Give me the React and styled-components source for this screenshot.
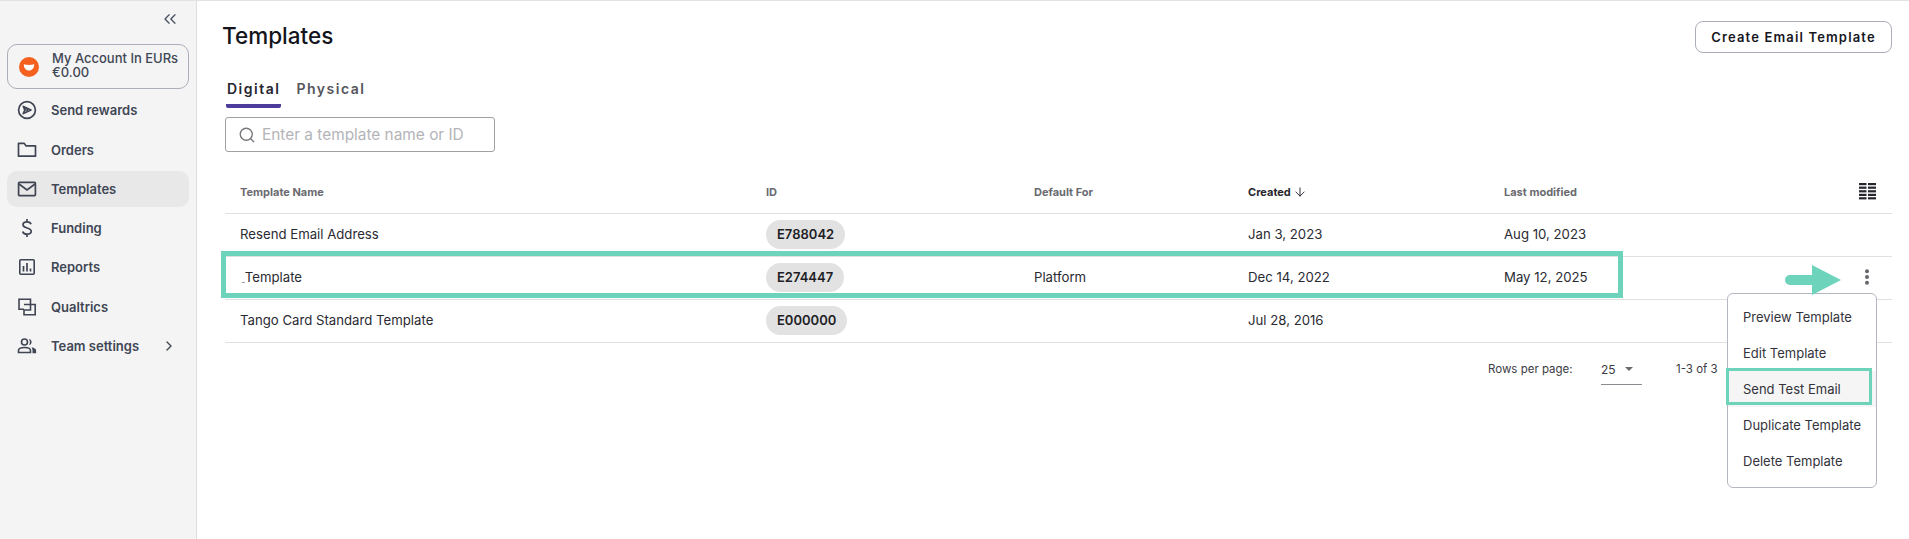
import React from "react";
import styled, { createGlobalStyle } from "styled-components";
import { ChevronsLeft, ChevronRight, Search, ArrowDown } from "lucide-react";

const Global = createGlobalStyle`
  html, body { margin: 0; padding: 0; background: #fff; }
  body { font-family: Inter, "Liberation Sans", sans-serif; color: #22222b; overflow: hidden; }
  * { box-sizing: border-box; }
`;

const Page = styled.div`
  width: 1909px; height: 539px; display: flex; border-top: 1px solid #e2e2e4; position: relative; overflow: hidden;
`;
const Sidebar = styled.aside`
  width: 197px; flex: none; background: #f4f4f4; border-right: 1px solid #dedee0;
  padding: 0 7px; display: flex; flex-direction: column;
`;
const Collapse = styled.div`
  height: 37px; display: flex; align-items: flex-end; justify-content: flex-end; padding: 0 9px 9px 0; color: #4a5160;
`;
const Account = styled.div`
  margin-top: 6px; height: 45px; border: 1px solid #a9aeb8; border-radius: 10px; display: flex; align-items: center;
  padding: 0 0 3px 11px; gap: 13px;
`;
const AccountLogo = styled.svg` width: 20px; height: 20px; flex: none; margin-top: 3px; `;
const AccountText = styled.div`
  font-size: 13px; font-weight: 500; line-height: 14px; color: #404654; white-space: nowrap;
`;
const NavItem = styled.div`
  height: 36px; margin-top: 3.3px; display: flex; align-items: center; padding-left: 10px; gap: 14px; border-radius: 10px;
  font-size: 13px; font-weight: 600; color: #404654; background: ${p => p.$active ? "#e8e8e8" : "transparent"};
  white-space: nowrap;
`;
const NavIcon = styled.span`
  width: 20px; height: 20px; display: flex; align-items: center; justify-content: center; flex: none;
`;
const NavChevron = styled.span`
  margin-left: auto; margin-right: 12px; display: flex;
`;
const Main = styled.main`
  flex: 1; padding: 20px 17px 0 22px; position: relative;
`;
const Header = styled.div`
  display: flex; justify-content: space-between; align-items: flex-start; height: 55px;
`;
const Title = styled.h1`
  margin: 1px 0 0 3px; font-size: 22.5px; line-height: 28px; font-weight: 500; color: #14141c;
`;
const CreateButton = styled.button`
  width: 197px; height: 32px; background: #fff; border: 1px solid #a9aeb8; border-radius: 8px;
  font: 600 13px Inter, sans-serif; letter-spacing: 1.15px; color: #17171f; padding: 0;
`;
const Tabs = styled.div`
  display: flex; gap: 14px; margin-left: 7px; height: 32px;
`;
const Tab = styled.div`
  height: 32px; padding: 4px 1px 0; font-size: 14px; font-weight: 600; letter-spacing: 1.5px;
  color: ${p => p.$active ? "#26262e" : "#55555c"};
  border-bottom: 4px solid ${p => p.$active ? "#4d3c9b" : "transparent"}; border-radius: 0 0 2px 2px;
`;
const SearchBox = styled.div`
  margin: 9px 0 0 6px; width: 270px; height: 35px; border: 1px solid #a0a0a4; border-radius: 3px;
  display: flex; align-items: center; padding-left: 12px; gap: 6px; color: #b4b4b8; font-size: 15.4px;
`;
const SearchIcon = styled(Search)` color: #77777c; `;
const Table = styled.div` margin: 18px 0 0 6px; `;
const Row = styled.div`
  display: grid; grid-template-columns: 526px 268px 214px 256px 1fr 50px; align-items: center; padding-left: 15px;
  padding-bottom: ${p => p.$head ? "0" : "2px"};
  height: ${p => p.$head ? "44px" : "43px"}; border-bottom: 1.5px solid #e0e0e3; font-size: 13.2px; color: #2a2a32;
`;
const HeadCell = styled.div`
  font-size: 11px; font-weight: 700; color: ${p => p.$strong ? "#26262e" : "#6a6a70"};
  display: flex; align-items: center; gap: 2px;
`;
const Chip = styled.span`
  display: inline-flex; align-items: center; height: 29px; padding: 0 11px; background: #e2e2e2; border-radius: 15px;
  font-size: 13px; font-weight: 600; color: #1e1e26; justify-self: start;
`;
const EndCell = styled.div` display: flex; justify-content: center; `;
const Underscore = styled.span` font-size: 6px; margin-left: 2px; `;
const Pagination = styled.div`
  display: flex; align-items: flex-start; margin-top: 15px; padding-left: 1269px; font-size: 11.5px; color: #3c3c44;
`;
const RowsLabel = styled.span` width: 113px; line-height: 22px; `;
const RowsSelect = styled.div`
  width: 41px; height: 27px; border-bottom: 1px solid #8a8a90; display: flex; justify-content: space-between;
  align-items: center; padding: 0 9px 4px 0; margin-right: 34px; font-size: 12px;
`;
const Caret = styled.span`
  width: 0; height: 0; border-left: 4.5px solid transparent; border-right: 4.5px solid transparent; border-top: 4.5px solid #6a6a70;
`;
const RangeText = styled.span` line-height: 22px; `;
const Menu = styled.div`
  position: absolute; left: 1530px; top: 292px; width: 150px; height: 195px; background: #fff;
  border: 1px solid #b3b7c0; border-radius: 6px; padding: 5px 0;
`;
const MenuItem = styled.div`
  height: 36px; display: flex; align-items: center; padding-left: 15px; font-size: 13px; color: #33333b;
  background: ${p => p.$hover ? "#f5f5f5" : "transparent"}; white-space: nowrap;
`;
const RowHighlight = styled.div`
  position: absolute; left: 24px; top: 250px; width: 1402px; height: 47px; border: 5px solid #6dd3bb; pointer-events: none;
`;
const MenuHighlight = styled.div`
  position: absolute; left: 1529px; top: 367px; width: 146px; height: 37px; border: 3px solid #6dd3bb; pointer-events: none;
`;
const Arrow = styled.svg` position: absolute; left: 1586px; top: 263px; `;

const stroke = "#3f4553";
const SendIcon = () => (
  <svg width="20" height="20" viewBox="0 0 20 20" fill="none" stroke={stroke} strokeWidth="1.7">
    <circle cx="10" cy="10" r="8.4" />
    <path d="M6.3 6.4 14 10l-7.7 3.6 1.5-3.6zM7.8 10H11" strokeLinejoin="round" />
  </svg>
);
const FolderIcon = () => (
  <svg width="20" height="20" viewBox="0 0 20 20" fill="none" stroke={stroke} strokeWidth="1.7">
    <path d="M1.5 16.2V3.4h5.8l1.6 2.4h9.6v10.4z" strokeLinejoin="round" />
  </svg>
);
const MailIcon = () => (
  <svg width="20" height="20" viewBox="0 0 20 20" fill="none" stroke={stroke} strokeWidth="1.7">
    <rect x="1.6" y="3.4" width="16.8" height="13.2" rx="0.8" />
    <path d="M2 5l8 6 8-6" />
  </svg>
);
const DollarIcon = () => (
  <svg width="20" height="20" viewBox="0 0 20 20" fill="none" stroke={stroke} strokeWidth="1.7">
    <path d="M14 6.2C13.6 4.5 12 3.8 10 3.8c-2.4 0-4 1.1-4 2.9 0 4.2 8.2 2.3 8.2 6.6 0 1.8-1.8 2.9-4.2 2.9-2.2 0-3.9-.9-4.3-2.7M10 1v2.8M10 16.2V19" />
  </svg>
);
const ReportsIcon = () => (
  <svg width="18" height="18" viewBox="0 0 18 18" fill="none" stroke={stroke}>
    <rect x="1.8" y="1.8" width="14.4" height="14.4" rx="1" strokeWidth="1.6" />
    <path d="M5.5 8v5.5M9 5v8.5M12.5 10.5v3" strokeWidth="1.7" />
  </svg>
);
const QualtricsIcon = () => (
  <svg width="20" height="20" viewBox="0 0 20 20" fill="none" stroke={stroke} strokeWidth="1.6">
    <path d="M13.5 7V2.2H2v10h5M7 7.5h11.2v10.3H7V13h6.5V7.5" />
  </svg>
);
const TeamIcon = () => (
  <svg width="20" height="18" viewBox="0 0 20 18">
    <circle cx="7.5" cy="5" r="3" fill="none" stroke={stroke} strokeWidth="1.6" />
    <path d="M1.5 15.5v-2c0-2 2-3 6-3s6 1 6 3v2z" fill="none" stroke={stroke} strokeWidth="1.6" />
    <path d="M12 1.9c3.2.3 3.8 5.6 0 6.2 1.2-1.9 1.2-4.3 0-6.200zM14.5 10.300c2.800.5 4.600 1.500 4.600 3.300v2.700h-3.600v-2.900c0-1.200-.4-2.200-1-3.100z" fill={stroke} />
  </svg>
);
const ColumnsIcon = () => (
  <svg width="17" height="17" viewBox="0 0 17 17" fill="#26262e">
    {[0, 3.6, 7.2, 10.8, 14.2].map(y => (
      <React.Fragment key={y}>
        <rect x="0" y={y} width="7.5" height="2.2" />
        <rect x="9" y={y} width="8" height="2.2" />
      </React.Fragment>
    ))}
  </svg>
);
const Kebab = () => (
  <svg width="6" height="16" viewBox="0 0 6 16" fill="#66666c">
    <circle cx="3" cy="2.2" r="2" /><circle cx="3" cy="8" r="2" /><circle cx="3" cy="13.8" r="2" />
  </svg>
);

const rows = [
  { name: "Resend Email Address", id: "E788042", def: "", created: "Jan 3, 2023", mod: "Aug 10, 2023" },
  { name: <><Underscore>_</Underscore>Template</>, id: "E274447", def: "Platform", created: "Dec 14, 2022", mod: "May 12, 2025", more: true },
  { name: "Tango Card Standard Template", id: "E000000", def: "", created: "Jul 28, 2016", mod: "" },
];
const menuItems = ["Preview Template", "Edit Template", "Send Test Email", "Duplicate Template", "Delete Template"];

export default function App() {
  return (
    <>
      <Global />
      <Page>
        <Sidebar>
          <Collapse><ChevronsLeft size={20} strokeWidth={1.6} /></Collapse>
          <Account>
            <AccountLogo viewBox="0 0 20 20">
              <circle cx="10" cy="10" r="10" fill="#f4611f" />
              <path d="M4.8 7.2c3.4.9 7 .9 10.4 0-.1 3.9-2 6.3-5.2 6.3S4.9 11.1 4.8 7.2z" fill="#fff" />
            </AccountLogo>
            <AccountText>My Account In EURs<br />€0.00</AccountText>
          </Account>
          <NavItem><NavIcon><SendIcon /></NavIcon>Send rewards</NavItem>
          <NavItem><NavIcon><FolderIcon /></NavIcon>Orders</NavItem>
          <NavItem $active><NavIcon><MailIcon /></NavIcon>Templates</NavItem>
          <NavItem><NavIcon><DollarIcon /></NavIcon>Funding</NavItem>
          <NavItem><NavIcon><ReportsIcon /></NavIcon>Reports</NavItem>
          <NavItem><NavIcon><QualtricsIcon /></NavIcon>Qualtrics</NavItem>
          <NavItem><NavIcon><TeamIcon /></NavIcon>Team settings<NavChevron><ChevronRight size={16} strokeWidth={2} /></NavChevron></NavItem>
        </Sidebar>
        <Main>
          <Header>
            <Title>Templates</Title>
            <CreateButton>Create Email Template</CreateButton>
          </Header>
          <Tabs>
            <Tab $active>Digital</Tab>
            <Tab>Physical</Tab>
          </Tabs>
          <SearchBox><SearchIcon size={18} strokeWidth={1.8} />Enter a template name or ID</SearchBox>
          <Table>
            <Row $head>
              <HeadCell>Template Name</HeadCell>
              <HeadCell>ID</HeadCell>
              <HeadCell>Default For</HeadCell>
              <HeadCell $strong>Created <ArrowDown size={14} strokeWidth={1.6} /></HeadCell>
              <HeadCell>Last modified</HeadCell>
              <EndCell><ColumnsIcon /></EndCell>
            </Row>
            {rows.map(r => (
              <Row key={r.id}>
                <div>{r.name}</div>
                <Chip>{r.id}</Chip>
                <div>{r.def}</div>
                <div>{r.created}</div>
                <div>{r.mod}</div>
                <EndCell>{r.more && <Kebab />}</EndCell>
              </Row>
            ))}
          </Table>
          <Pagination>
            <RowsLabel>Rows per page:</RowsLabel>
            <RowsSelect>25<Caret /></RowsSelect>
            <RangeText>1-3 of 3</RangeText>
          </Pagination>
          <Menu>
            {menuItems.map(m => <MenuItem key={m} $hover={m === "Send Test Email"}>{m}</MenuItem>)}
          </Menu>
          <RowHighlight />
          <MenuHighlight />
          <Arrow width="60" height="32" viewBox="0 0 60 32">
            <path d="M7 11h22V1l29 15-29 15V21H7a5 5 0 0 1 0-10z" fill="#6dd3bb" />
          </Arrow>
        </Main>
      </Page>
    </>
  );
}
